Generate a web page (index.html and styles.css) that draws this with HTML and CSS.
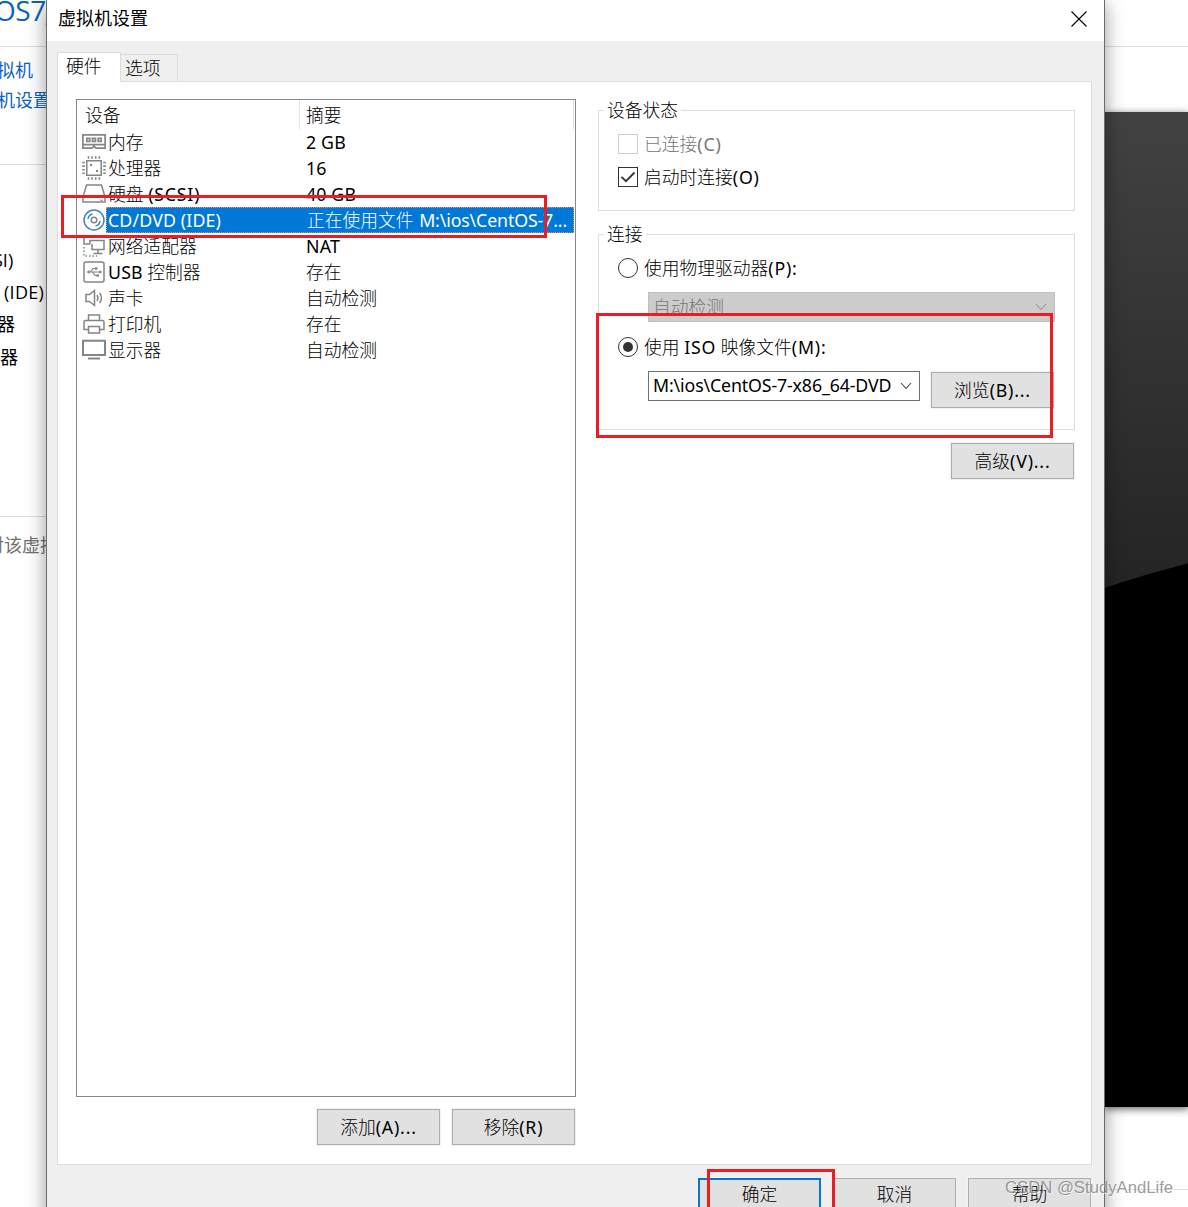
FILE: index.html
```html
<!DOCTYPE html>
<html lang="zh-CN">
<head>
<meta charset="utf-8">
<title>虚拟机设置</title>
<link rel="stylesheet" href="styles.css">
</head>
<body>
<div class="desktop">
  <div class="backdrop">
    <div class="sidebar">
      <div class="side-title">OS7_</div>
      <div class="side-links"><span>拟机</span><span>机设置</span></div>
      <div class="side-devices"><span class="d1">SI)</span><span class="d2">(IDE)</span><span class="d3">器</span><span class="d4">器</span></div>
      <div class="side-note">对该虚拟</div>
    </div>
    <div class="preview">
      <div class="preview-head"></div>
      <div class="preview-gap"></div>
      <svg class="screen" width="85" height="995" viewBox="0 0 85 995">
        <defs><linearGradient id="shade" x1="0" y1="0" x2="0" y2="1"><stop offset="0" stop-color="#424242"/><stop offset="1" stop-color="#242424"/></linearGradient></defs>
        <rect width="85" height="995" fill="#000"/>
        <path d="M0 0H85V451Q42 462 0 476Z" fill="url(#shade)"/>
      </svg>
      <div class="preview-foot"></div>
    </div>
  </div>

  <div class="dialog">
    <div class="titlebar"><span>虚拟机设置</span>
      <svg class="close" width="16" height="16" viewBox="0 0 16 16"><path d="M.5 .5L15.5 15.5M15.5 .5L.5 15.5" stroke="#000" stroke-width="1.1"/></svg>
    </div>
    <div class="tabs"><div class="tab active">硬件</div><div class="tab">选项</div></div>
    <div class="panel">
      <div class="left">
        <div class="list">
          <div class="list-head"><span class="name">设备</span><span class="summary">摘要</span></div>
          <div class="row"><svg class="ico" viewBox="0 0 24 24" stroke-width="1.7"><path d="M.9 4.8H23.1V18.2H14L12 16.2L10 18.2H.9ZM1 14.7H23"/><path d="M4.8 8.3h3v3h-3zM10.5 8.3h3v3h-3zM16.2 8.3h3v3h-3z"/></svg><span class="name">内存</span><span class="summary"><span class="en">2 GB</span></span></div>
          <div class="row"><svg class="ico" viewBox="0 0 24 24" stroke-width="1.5"><path d="M4.8 4.8H19.2V19.2H4.8Z"/><path stroke-width="2.6" stroke-dasharray="1.6 2" d="M5.7 1.5H19M5.7 22.5H19M1.5 5.7V19M22.5 5.7V19"/><path fill="#858585" stroke="none" d="M8 8h2v2H8zM14 14h2v2H14z"/></svg><span class="name">处理器</span><span class="summary"><span class="en">16</span></span></div>
          <div class="row"><svg class="ico" viewBox="0 0 24 24" stroke-width="1.5"><path d="M4.5 3H19.5L23 15V20H1V15Z"/><path d="M18 18.2H21" stroke-width="1"/></svg><span class="name">硬盘 <span class="en wide">(SCSI)</span></span><span class="summary"><span class="en">40 GB</span></span></div>
          <div class="row selected"><svg class="ico disc" viewBox="0 0 24 24" stroke-width="1.5"><circle cx="12" cy="12" r="10"/><circle cx="12" cy="12" r="2.8" stroke="#858585"/><path d="M6 11Q6.5 7 10.5 6M18 13Q17.5 17 13.5 18"/></svg><div class="selection"><span class="name"><span class="en">CD/DVD (IDE)</span></span><span class="summary">正在使用文件 <span class="en path-text">M:\ios\CentOS-7...</span></span></div></div>
          <div class="row"><svg class="ico" viewBox="0 0 24 24" stroke-width="1.5"><path d="M8 10H2V2M8 10V6.5H22V15.5H10V10M16 16V19.5M11.5 19.5H20.5"/><path d="M2 13V22H15" stroke-dasharray="1.5 2"/></svg><span class="name">网络适配器</span><span class="summary"><span class="en">NAT</span></span></div>
          <div class="row"><svg class="ico" viewBox="0 0 24 24" stroke-width="1.5"><rect x="2" y="2" width="20" height="20" rx="2"/><path stroke-width="1.2" d="M6 12H18M8.5 12L11 8.5H14M10.5 12L13 15.5H15.5"/><path fill="#858585" stroke="none" d="M4.5 12L7.5 10V14ZM13 7.3h2.4v2.4h-2.4zM14.5 14.3h2.4v2.4h-2.4zM17 10.8h2.4v2.4H17z"/></svg><span class="name"><span class="en">USB</span> 控制器</span><span class="summary">存在</span></div>
          <div class="row"><svg class="ico" viewBox="0 0 24 24" stroke-width="1.5"><path d="M4 8.5H7.5L12.5 4.5V19.5L7.5 15.5H4ZM15 9Q17 12 15 15M17.5 7Q21.5 12 17.5 17"/></svg><span class="name">声卡</span><span class="summary">自动检测</span></div>
          <div class="row"><svg class="ico" viewBox="0 0 24 24" stroke-width="1.5"><path d="M6.5 8.5V3H17.5V8.5M6 17.5H2V10Q2 8.5 3.5 8.5H20.5Q22 8.5 22 10V17.5H18M6.5 14.5H17.5V21H6.5Z"/></svg><span class="name">打印机</span><span class="summary">存在</span></div>
          <div class="row"><svg class="ico" viewBox="0 0 24 24" stroke-width="2"><path d="M1 2.8H23V17H1ZM6 20.5H18"/></svg><span class="name">显示器</span><span class="summary">自动检测</span></div>
        </div>
        <div class="list-actions"><div class="btn">添加<span class="en wide">(A)...</span></div><div class="btn">移除<span class="en wide">(R)</span></div></div>
      </div>
      <div class="right">
        <div class="group status">
          <div class="legend">设备状态</div>
          <div class="option disabled"><span class="check"></span><span>已连接<span class="en wide">(C)</span></span></div>
          <div class="option"><span class="check"><svg width="18" height="18" viewBox="0 0 18 18"><path d="M2.5 8.8L7 13.2L15.5 4.5" fill="none" stroke="#333" stroke-width="1.8"/></svg></span><span>启动时连接<span class="en wide">(O)</span></span></div>
        </div>
        <div class="group connection">
          <div class="legend">连接</div>
          <div class="option"><span class="radio"></span><span>使用物理驱动器<span class="en wide">(P):</span></span></div>
          <div class="combo off"><span>自动检测</span><svg width="12" height="8" viewBox="0 0 12 8"><path d="M1 1L6 6.5L11 1"/></svg></div>
          <div class="option iso"><span class="radio on"></span><span>使用 <span class="en wide">ISO</span> 映像文件<span class="en wide">(M):</span></span></div>
          <div class="file"><div class="combo"><span class="en path">M:\ios\CentOS-7-x86_64-DVD</span><svg width="12" height="8" viewBox="0 0 12 8"><path d="M1 1L6 6.5L11 1"/></svg></div><div class="btn">浏览<span class="en wide">(B)...</span></div></div>
        </div>
        <div class="btn advanced">高级<span class="en wide">(V)...</span></div>
      </div>
    </div>
    <div class="footer"><div class="btn primary">确定</div><div class="btn">取消</div><div class="btn">帮助</div></div>
  </div>

  <div class="mark mark-device"></div>
  <div class="mark mark-iso"></div>
  <div class="mark mark-ok"></div>
  <div class="watermark">CSDN @StudyAndLife</div>
</div>
</body>
</html>
```
FILE: styles.css
```css
* { box-sizing: border-box; }
body { margin: 0; background: #fff; }
.desktop {
  position: relative; width: 1188px; height: 1207px; overflow: hidden;
  font: 300 17.75px/26px "Noto Sans", "Noto Sans CJK SC", sans-serif; color: #000; white-space: nowrap;
}
.en { font-weight: 400; letter-spacing: .15px; }
.en.wide { letter-spacing: .8px; }
.en.path, .en.path-text { letter-spacing: -.13px; }
.path-text { margin-left: 1px; }
.backdrop { display: flex; justify-content: space-between; height: 1207px; }
.sidebar { width: 47px; overflow: hidden; font: 400 18px/30px "Open Sans", "Noto Sans CJK SC", sans-serif; }
.side-title { height: 47px; border-bottom: 1px solid #dcdcdc; color: #0b62c4; font-size: 28px; line-height: 20px; margin-left: -6px; letter-spacing: -.5px; }
.side-links { display: flex; flex-direction: column; height: 118px; padding-top: 8px; border-bottom: 1px solid #dcdcdc; color: #0b62c4; margin-left: -3px; }
.side-devices { display: flex; flex-direction: column; height: 352px; padding-top: 79px; border-bottom: 1px solid #dcdcdc; line-height: 32.2px; }
.d1 { margin-left: -7px; }
.d2 { margin-left: 4px; letter-spacing: .3px; }
.d3 { margin-left: -3px; }
.side-note { margin: 13px 0 0 -14px; color: #707070; }
.preview { width: 84px; }
.preview-head { height: 47px; border-bottom: 1px solid #dcdcdc; }
.preview-gap { height: 65px; }
.screen { display: block; box-shadow: 0 2px 8px #0009; }
.preview-foot { height: 83px; border-bottom: 1px solid #dcdcdc; }

.dialog {
  position: absolute; left: 46px; top: 0; width: 1059px; height: 1230px; background: #efefef;
  border: solid #6c6c6c; border-width: 0 1px; box-shadow: 0 4px 18px #0006;
}
.titlebar { display: flex; justify-content: space-between; height: 41px; padding: 5px 17px 0 11px; background: #fff; font-size: 18px; font-weight: 400; }
.close { margin-top: 6px; }
.tabs { display: flex; align-items: flex-end; height: 41px; padding-left: 10px; }
.tab { width: 57px; height: 28px; padding-left: 4px; border: 1px solid #dcdcdc; border-left: 0; }
.tab.active { z-index: 1; width: 64px; height: 30px; padding-left: 8px; border-left: 1px solid #dcdcdc; border-bottom: 0; background: #fff; }
.panel { display: flex; gap: 22px; width: 1035px; height: 1084px; margin: -1px 0 0 10px; padding: 17px 16px 0 18px; border: 1px solid #dcdcdc; background: #fff; }
.list { width: 500px; height: 998px; border: 1px solid #828790; }
.list-head { display: flex; height: 29px; line-height: 31px; }
.list-head .name { width: 223px; padding-left: 8px; border-right: 1px solid #e2e2e2; }
.list-head .summary { flex: 1; padding-left: 6px; border-right: 1px solid #e2e2e2; margin-right: 1px; }
.row { display: flex; height: 26px; padding-left: 5px; line-height: 26px; }
.ico { flex: none; width: 24px; height: 24px; margin: 1px 2px 0 0; fill: none; stroke: #858585; }
.disc { margin-right: 0; stroke: #4585b5; }
.row .name { width: 198px; }
.selection { display: flex; width: 468px; height: 26px; outline: 1px dotted #f0923a; outline-offset: -1px; padding-left: 2px; background: #0078d7; color: #fff; }
.selection .name { width: 199px; }
.list-actions { display: flex; justify-content: flex-end; gap: 12px; padding: 12px 1px 0 0; }
.btn { width: 123px; height: 36px; border: 1px solid #adadad; background: #e1e1e1; box-shadow: 0 0 0 1px #f2f2f2; text-align: center; line-height: 35px; }
.right { width: 477px; padding-top: 11px; }
.group { border: 1px solid #dcdcdc; padding-left: 19px; }
.legend { width: max-content; height: 26px; margin: -14px 0 0 -14px; padding: 0 3px; background: #fff; }
.status { height: 101px; }
.connection { height: 196px; margin-top: 23px; }
.option { display: flex; align-items: center; gap: 6px; height: 33px; }
.status .option:nth-child(2) { margin-top: 4px; }
.disabled { color: #777; }
.check { width: 20px; height: 20px; border: 1px solid #333; background: #fff; }
.check svg { display: block; }
.disabled .check { border-color: #ccc; }
.connection .legend + .option { margin-top: 4px; }
.radio { display: grid; place-items: center; width: 20px; height: 20px; border: 1px solid #333; border-radius: 50%; }
.on::after { content: ""; width: 10px; height: 10px; border-radius: 50%; background: #333; }
.combo { display: flex; align-items: center; justify-content: space-between; width: 272px; height: 30px; padding: 0 7px 0 4px; border: 1px solid #707070; background: #fff; }
.path { width: 239px; height: 28px; overflow: hidden; }
.combo svg { flex: none; fill: none; stroke: #444; stroke-width: 1.1; }
.combo.off { width: 407px; margin: 8px 0 0 30px; border-color: #bfbfbf; background: #ccc; color: #777; }
.combo.off svg { stroke: #999; }
.iso { margin-top: 8px; }
.file { display: flex; gap: 11px; margin: 8px 0 0 30px; }
.file .btn { margin-top: 1px; }
.advanced { margin: 13px 0 0 353px; }
.footer { display: flex; justify-content: flex-end; gap: 12px; padding: 13px 13px 0 0; }
.footer .btn { line-height: 31px; }
.footer .primary { border: 2px solid #0078d7; line-height: 29px; }
.mark { position: absolute; border: 3px solid #ed1c24; }
.mark-device { left: 61px; top: 195px; width: 486px; height: 43px; }
.mark-iso { left: 596px; top: 313px; width: 457px; height: 125px; }
.mark-ok { left: 707px; top: 1169px; width: 128px; height: 60px; }
.watermark { position: absolute; left: 1005px; top: 1176px; font: 400 16.7px/24px "Liberation Sans", sans-serif; color: #777b; text-shadow: 1px 1px 0 #fff9; }
```
